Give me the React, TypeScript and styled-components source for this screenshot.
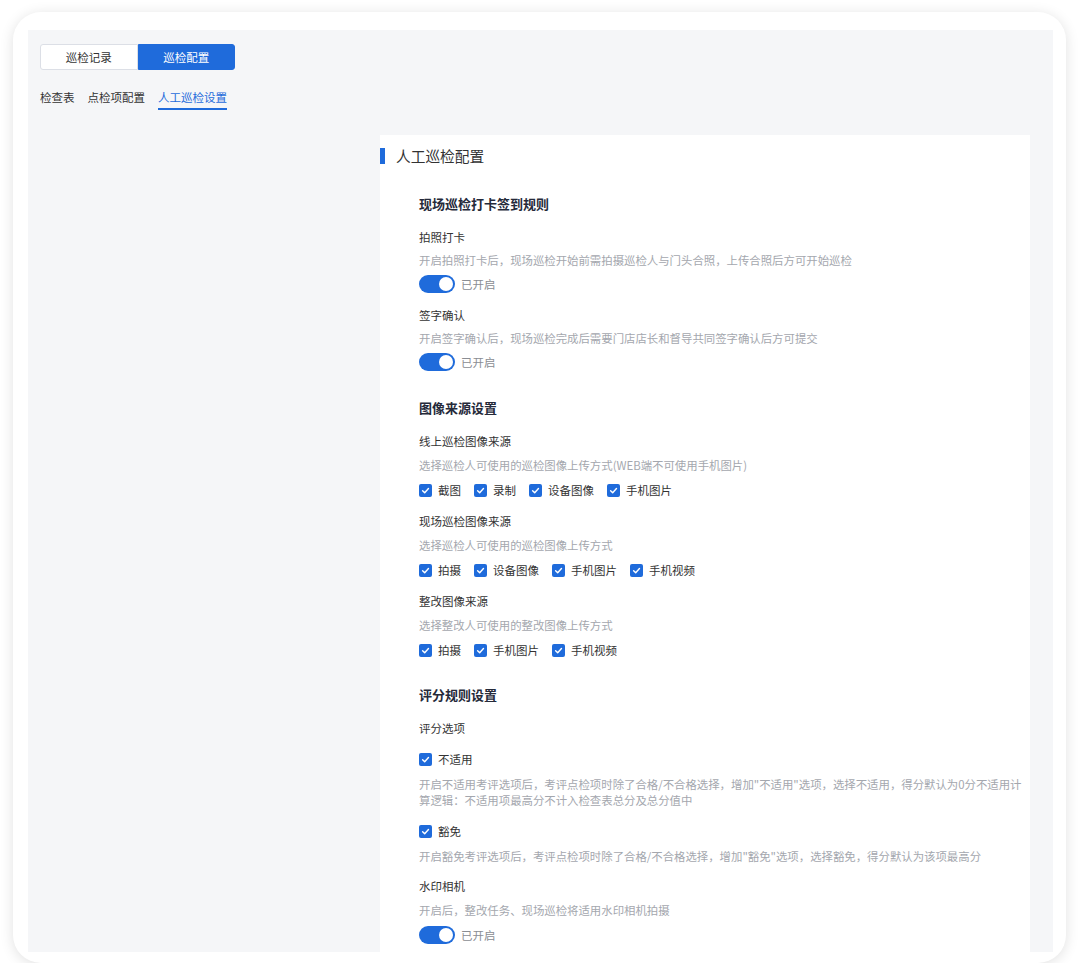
import React from "react";
import styled, { createGlobalStyle } from "styled-components";

const Global = createGlobalStyle`
  html, body { margin: 0; padding: 0; background: #ffffff; }
  body { font-family: "Noto Sans CJK SC", "Noto Sans", sans-serif; color: #333; }
  * { box-sizing: border-box; }
`;

const BLUE = "#1f6bdb";

const Frame = styled.div`
  margin: 12px 0 0 13px;
  width: 1053px;
  height: 951px;
  background: #fff;
  border-radius: 28px;
  box-shadow: 0 2px 14px rgba(0, 0, 0, 0.12);
  padding: 18px 13px 11px 15px;
  display: flex;
`;

const Viewport = styled.div`
  flex: 1;
  background: #f5f6f8;
  overflow: hidden;
  padding: 14px 12px 0 12px;
  display: flex;
  flex-direction: column;
  & > * {
    flex-shrink: 0;
  }
`;

const Segmented = styled.div`
  display: flex;
  width: 195px;
  height: 26px;
`;

const SegButton = styled.div<{ $active?: boolean }>`
  flex: 1;
  display: flex;
  align-items: center;
  justify-content: center;
  font-size: 11.5px;
  color: ${(p) => (p.$active ? "#fff" : "#333")};
  background: ${(p) => (p.$active ? BLUE : "#fff")};
  border: 1px solid ${(p) => (p.$active ? BLUE : "#dcdfe6")};
  border-radius: ${(p) => (p.$active ? "0 3px 3px 0" : "3px 0 0 3px")};
`;

const SubTabs = styled.div`
  display: flex;
  gap: 13px;
  margin-top: 19px;
`;

const SubTab = styled.div<{ $active?: boolean }>`
  font-size: 11.5px;
  line-height: 16px;
  padding-bottom: 3px;
  color: ${(p) => (p.$active ? BLUE : "#333")};
  border-bottom: 2px solid ${(p) => (p.$active ? BLUE : "transparent")};
`;

const Card = styled.div`
  margin: 25px 0 0 340px;
  width: 650px;
  background: #fff;
  padding: 13px 8px 40px 0;
`;

const CardTitle = styled.div`
  display: flex;
  align-items: center;
  gap: 11px;
  font-size: 14.7px;
  line-height: 16px;
  color: #333;
  &::before {
    content: "";
    width: 5px;
    height: 16px;
    background: ${BLUE};
  }
`;

const Body = styled.div`
  padding-left: 39px;
  margin-top: 31px;
`;

const Section = styled.div<{ $gapAfter?: number }>`
  margin-bottom: ${(p) => p.$gapAfter ?? 27}px;
`;

const SectionTitle = styled.div`
  font-size: 13px;
  font-weight: 700;
  line-height: 18px;
  color: #252a3a;
  margin-bottom: 16px;
`;

const Item = styled.div<{ $tight?: boolean }>`
  display: flex;
  flex-direction: column;
  gap: ${(p) => (p.$tight ? 7 : 8)}px;
  & + & {
    margin-top: 14px;
  }
`;

const Label = styled.div`
  font-size: 11.5px;
  line-height: 16px;
  color: #333;
`;

const Desc = styled.div`
  font-size: 11.4px;
  line-height: 16px;
  color: #a4a7ae;
`;

const ToggleRow = styled.div`
  display: flex;
  align-items: center;
  gap: 6px;
  height: 18px;
`;

const Track = styled.div<{ $on?: boolean }>`
  width: 36px;
  height: 18px;
  border-radius: 9px;
  background: ${(p) => (p.$on ? BLUE : "#ccc")};
  display: flex;
  align-items: center;
  justify-content: ${(p) => (p.$on ? "flex-end" : "flex-start")};
  padding: 2px;
`;

const Knob = styled.div`
  width: 14px;
  height: 14px;
  border-radius: 50%;
  background: #fff;
`;

const ToggleText = styled.span`
  font-size: 11.5px;
  color: #8a8d93;
`;

const CheckRow = styled.div`
  display: flex;
  gap: 13px;
  height: 18px;
  align-items: center;
`;

const CheckItem = styled.label`
  display: flex;
  align-items: center;
  gap: 6px;
  font-size: 11.5px;
  color: #333;
`;

const Box = styled.span`
  width: 13px;
  height: 13px;
  border-radius: 2px;
  background: ${BLUE};
  display: inline-flex;
  align-items: center;
  justify-content: center;
`;

const Toggle = ({ text = "已开启" }: { text?: string }) => (
  <ToggleRow>
    <Track $on>
      <Knob />
    </Track>
    <ToggleText>{text}</ToggleText>
  </ToggleRow>
);

const Check = ({ label }: { label: string }) => (
  <CheckItem>
    <Box>
      <svg width="9" height="9" viewBox="0 0 10 10">
        <path d="M1.8 5.2 L4.1 7.4 L8.3 2.8" fill="none" stroke="#fff" strokeWidth="1.6" strokeLinecap="round" strokeLinejoin="round" />
      </svg>
    </Box>
    {label}
  </CheckItem>
);

const Checks = ({ items }: { items: string[] }) => (
  <CheckRow>
    {items.map((i) => (
      <Check key={i} label={i} />
    ))}
  </CheckRow>
);

export default function App() {
  return (
    <>
      <Global />
      <Frame>
        <Viewport>
          <Segmented>
            <SegButton>巡检记录</SegButton>
            <SegButton $active>巡检配置</SegButton>
          </Segmented>
          <SubTabs>
            <SubTab>检查表</SubTab>
            <SubTab>点检项配置</SubTab>
            <SubTab $active>人工巡检设置</SubTab>
          </SubTabs>
          <Card>
            <CardTitle>人工巡检配置</CardTitle>
            <Body>
              <Section $gapAfter={28}>
                <SectionTitle>现场巡检打卡签到规则</SectionTitle>
                <Item $tight>
                  <Label>拍照打卡</Label>
                  <Desc>开启拍照打卡后，现场巡检开始前需拍摄巡检人与门头合照，上传合照后方可开始巡检</Desc>
                  <Toggle />
                </Item>
                <Item $tight>
                  <Label>签字确认</Label>
                  <Desc>开启签字确认后，现场巡检完成后需要门店店长和督导共同签字确认后方可提交</Desc>
                  <Toggle />
                </Item>
              </Section>
              <Section $gapAfter={27}>
                <SectionTitle>图像来源设置</SectionTitle>
                <Item>
                  <Label>线上巡检图像来源</Label>
                  <Desc>选择巡检人可使用的巡检图像上传方式(WEB端不可使用手机图片)</Desc>
                  <Checks items={["截图", "录制", "设备图像", "手机图片"]} />
                </Item>
                <Item>
                  <Label>现场巡检图像来源</Label>
                  <Desc>选择巡检人可使用的巡检图像上传方式</Desc>
                  <Checks items={["拍摄", "设备图像", "手机图片", "手机视频"]} />
                </Item>
                <Item>
                  <Label>整改图像来源</Label>
                  <Desc>选择整改人可使用的整改图像上传方式</Desc>
                  <Checks items={["拍摄", "手机图片", "手机视频"]} />
                </Item>
              </Section>
              <Section>
                <SectionTitle>评分规则设置</SectionTitle>
                <Item>
                  <Label>评分选项</Label>
                </Item>
                <Item>
                  <Checks items={["不适用"]} />
                  <Desc>
                    开启不适用考评选项后，考评点检项时除了合格/不合格选择，增加"不适用"选项，选择不适用，得分默认为0分不适用计算逻辑：不适用项最高分不计入检查表总分及总分值中
                  </Desc>
                </Item>
                <Item>
                  <Checks items={["豁免"]} />
                  <Desc>开启豁免考评选项后，考评点检项时除了合格/不合格选择，增加"豁免"选项，选择豁免，得分默认为该项最高分</Desc>
                </Item>
                <Item>
                  <Label>水印相机</Label>
                  <Desc>开启后，整改任务、现场巡检将适用水印相机拍摄</Desc>
                  <Toggle />
                </Item>
              </Section>
            </Body>
          </Card>
        </Viewport>
      </Frame>
    </>
  );
}
